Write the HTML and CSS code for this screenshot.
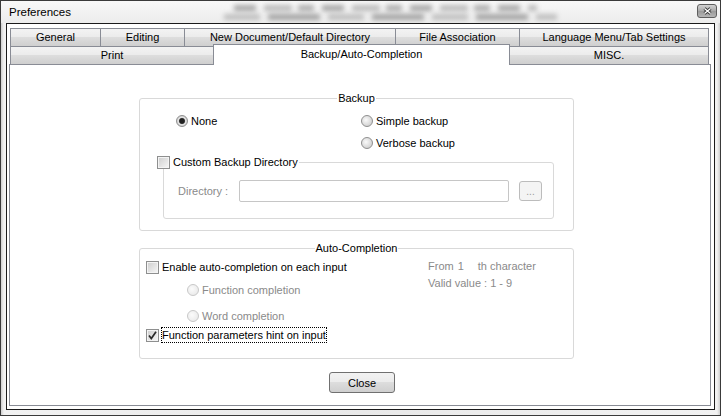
FILE: index.html
```html
<!DOCTYPE html>
<html lang="en">
<head>
    <meta charset="UTF-8">
    <title>Preferences</title>
    <link rel="stylesheet" href="styles.css">
</head>
<body>
  <div class="window">
    <div class="titlebar">
      <span class="title">Preferences</span>
      <div class="glass">
        <span class="smear smear-top"></span>
        <span class="smear smear-bottom"></span>
      </div>
      <span class="close-x">
        <svg width="9" height="8" viewBox="0 0 9 8">
          <path d="M1.5 1.5 L7.5 6.5 M7.5 1.5 L1.5 6.5" stroke="#333" stroke-width="3"/>
          <path d="M1.5 1.5 L7.5 6.5 M7.5 1.5 L1.5 6.5" stroke="#fff" stroke-width="1.4"/>
        </svg>
      </span>
    </div>

    <div class="client">
      <div class="tabs">
        <div class="tab-row">
          <div class="tab t-general">General</div>
          <div class="tab t-editing">Editing</div>
          <div class="tab t-newdoc">New Document/Default Directory</div>
          <div class="tab t-assoc">File Association</div>
          <div class="tab t-lang">Language Menu/Tab Settings</div>
        </div>
        <div class="tab-row row-front">
          <div class="tab t-print">Print</div>
          <div class="tab t-backup active">Backup/Auto-Completion</div>
          <div class="tab t-misc">MISC.</div>
        </div>
      </div>

      <div class="pane">
        <fieldset class="group backup">
          <legend>Backup</legend>
          <div class="backup-opts">
            <label class="opt"><span class="radio on"></span>None</label>
            <label class="opt"><span class="radio"></span>Simple backup</label>
            <label class="opt col2"><span class="radio"></span>Verbose backup</label>
          </div>
          <fieldset class="group custom">
            <legend class="check-legend"><span class="check"></span>Custom Backup Directory</legend>
            <div class="dir-row">
              <span class="dir-label dim">Directory :</span>
              <span class="field"></span>
              <span class="browse">...</span>
            </div>
          </fieldset>
        </fieldset>

        <fieldset class="group auto">
          <legend>Auto-Completion</legend>
          <div class="auto-body">
            <div class="auto-left">
              <label class="opt row-enable"><span class="check"></span>Enable auto-completion on each input</label>
              <label class="opt sub row-func dim"><span class="radio off"></span>Function completion</label>
              <label class="opt sub row-word dim"><span class="radio off"></span>Word completion</label>
              <label class="opt row-hint">
                <span class="check">
                  <svg width="11" height="11" viewBox="0 0 11 11">
                    <path d="M2 5.5 L4.3 8.5 L9 1.8" fill="none" stroke="#2a2a2a" stroke-width="1.7"/>
                  </svg>
                </span>
                <span class="focused">Function parameters hint on input</span>
              </label>
            </div>
            <div class="auto-right dim">
              <div><span>From</span><span class="num">1</span><span>th character</span></div>
              <div>Valid value : 1 - 9</div>
            </div>
          </div>
        </fieldset>

        <button class="close-btn" type="button">Close</button>
      </div>
    </div>
  </div>
</body>
</html>
```

FILE: styles.css
```css
body {
    margin: 0;
    font-family: "Liberation Sans", Arial, sans-serif;
    font-size: 11px;
    color: #000;
    background: #fff;
}

.window {
    width: 721px;
    height: 416px;
    box-sizing: border-box;
    border: 1px solid #3a3a3a;
    background: linear-gradient(to right, #cfcfcf, #f2f2f2 3px, #e9e9e9 50%, #f2f2f2 calc(100% - 3px), #cfcfcf);
}

/* title bar */
.titlebar {
    height: 22px;
    display: flex;
    align-items: center;
    padding: 0 3px 0 8px;
    background: linear-gradient(#f8f8f8, #ececec);
}
.title {
    font-size: 11.5px;
    width: 200px;
}
.glass {
    flex: 1;
    align-self: stretch;
    display: flex;
    flex-direction: column;
    justify-content: center;
    gap: 3px;
    overflow: hidden;
}
.smear {
    display: block;
    height: 6px;
    filter: blur(2.4px);
    opacity: 0.4;
}
.smear-top {
    margin: 0 160px 0 25px;
    background: repeating-linear-gradient(to right, #333 0 22px, transparent 22px 30px, #666 30px 58px, transparent 58px 64px, #444 64px 80px, transparent 80px 88px);
}
.smear-bottom {
    margin: 0 140px 0 15px;
    background: repeating-linear-gradient(to right, #777 0 36px, transparent 36px 44px, #333 44px 96px, transparent 96px 104px);
}
.close-x {
    width: 20px;
    height: 14px;
    box-sizing: border-box;
    margin: 0 0 3px 0;
    border: 1px solid #5e5e5e;
    border-radius: 3px;
    background: linear-gradient(#d2d2d2, #a9a9a9 50%, #999 50%, #b5b5b5);
    display: flex;
    align-items: center;
    justify-content: center;
}

/* client area */
.client {
    margin: 0 5px 5px;
    height: 387px;
    box-sizing: border-box;
    border: 1px solid #1a1a1a;
    background: #fff;
    padding: 4px 3px 3px 2px;
}

/* tabs */
.tabs {
    margin-left: 1px;
}
.tab-row {
    display: flex;
    height: 18px;
}
.row-front {
    align-items: flex-end;
}
.tab {
    box-sizing: border-box;
    height: 18px;
    margin-left: -1px;
    border: 1px solid #898c95;
    border-bottom: none;
    background: linear-gradient(#f3f3f3, #ebebeb 50%, #dddddd 50%, #cfcfcf);
    text-align: center;
    line-height: 16px;
    white-space: nowrap;
}
.tab:first-child {
    margin-left: 0;
}
.tab.active {
    position: relative;
    z-index: 1;
    height: 21px;
    margin-bottom: -1px;
    background: #fff;
    line-height: 18px;
}
.t-general { width: 91px; }
.t-editing { width: 85px; }
.t-newdoc { width: 212px; }
.t-assoc { width: 125px; }
.t-lang { width: 190px; }
.t-print { width: 204px; }
.t-backup { width: 297px; }
.t-misc { width: 200px; }

.pane {
    box-sizing: border-box;
    width: 702px;
    height: 342px;
    border: 1px solid #898c95;
    background: #fff;
    padding-top: 27px;
}

/* group boxes */
.group {
    box-sizing: border-box;
    width: 435px;
    min-width: 0;
    margin: 0 0 0 129px;
    padding: 0;
    border: 1px solid #d9d9d9;
    border-radius: 3px;
}
.group > legend {
    margin: 0 auto;
    padding: 0 1px;
    line-height: 13px;
}

.backup-opts {
    display: grid;
    grid-template-columns: 185px auto;
    grid-auto-rows: 22px;
    padding: 5px 0 0 36px;
}
.col2 {
    grid-column: 2;
}
.opt {
    display: flex;
    align-items: center;
    gap: 3px;
    white-space: nowrap;
}

.group.custom {
    width: 391px;
    margin: 2px 0 11px 23px;
}
.group > legend.check-legend {
    margin: 0 0 0 -7px;
    padding: 0 1px 0 0;
    display: flex;
    align-items: center;
    gap: 3px;
}
.dir-row {
    display: flex;
    align-items: center;
    padding: 11px 0 16px 14px;
}
.dir-label {
    width: 61px;
}
.field {
    box-sizing: border-box;
    width: 270px;
    height: 22px;
    border: 1px solid #c6c6c6;
    border-radius: 2px;
}
.browse {
    box-sizing: border-box;
    width: 23px;
    height: 20px;
    margin-left: 10px;
    border: 1px solid #bcbcbc;
    border-radius: 3px;
    background: #f4f4f4;
    color: #9a9a9a;
    text-align: center;
    line-height: 20px;
    font-size: 10px;
}

.group.auto {
    margin-top: 11px;
}
.auto-body {
    display: flex;
    padding: 0 0 15px 6px;
}
.auto-left {
    width: 282px;
    padding-top: 4px;
}
.auto-left .opt {
    height: 16px;
}
.sub {
    padding-left: 41px;
}
.row-func { margin-top: 7px; }
.row-word { margin-top: 10px; }
.row-hint { margin-top: 3px; }
.focused {
    display: inline-block;
    height: 14px;
    line-height: 14px;
    outline: 1px dotted #000;
}
.auto-right {
    padding-top: 3px;
    line-height: 17px;
}
.num {
    margin: 0 14px 0 4px;
}

.dim {
    color: #8a8a8a;
}

/* checkbox and radio glyphs */
.check {
    flex: none;
    width: 13px;
    height: 13px;
    box-sizing: border-box;
    border: 1px solid #8e8f8f;
    background: linear-gradient(135deg, #cdcdcd, #f7f7f7);
    box-shadow: inset 0 0 0 1px #f4f4f4;
    display: flex;
    align-items: center;
    justify-content: center;
}
.radio {
    flex: none;
    width: 12px;
    height: 12px;
    box-sizing: border-box;
    border: 1px solid #8f8f8f;
    border-radius: 50%;
    background: radial-gradient(circle at 40% 40%, #fafafa, #d4d4d4 70%);
}
.radio.on {
    background: radial-gradient(circle, #222 0 2.4px, #7a7a7a 3px, #e9e9e9 3.6px, #d0d0d0 70%);
}
.radio.off {
    border-color: #c8c8c8;
    background: radial-gradient(circle at 40% 40%, #fbfbfb, #ececec 70%);
}

.close-btn {
    display: block;
    width: 66px;
    height: 21px;
    margin: 13px 0 0 319px;
    padding: 0;
    box-sizing: border-box;
    border: 1px solid #707070;
    border-radius: 3px;
    background: linear-gradient(#f2f2f2, #ebebeb 50%, #dddddd 50%, #cfcfcf);
    font-family: inherit;
    font-size: 11px;
    color: #000;
}
```
